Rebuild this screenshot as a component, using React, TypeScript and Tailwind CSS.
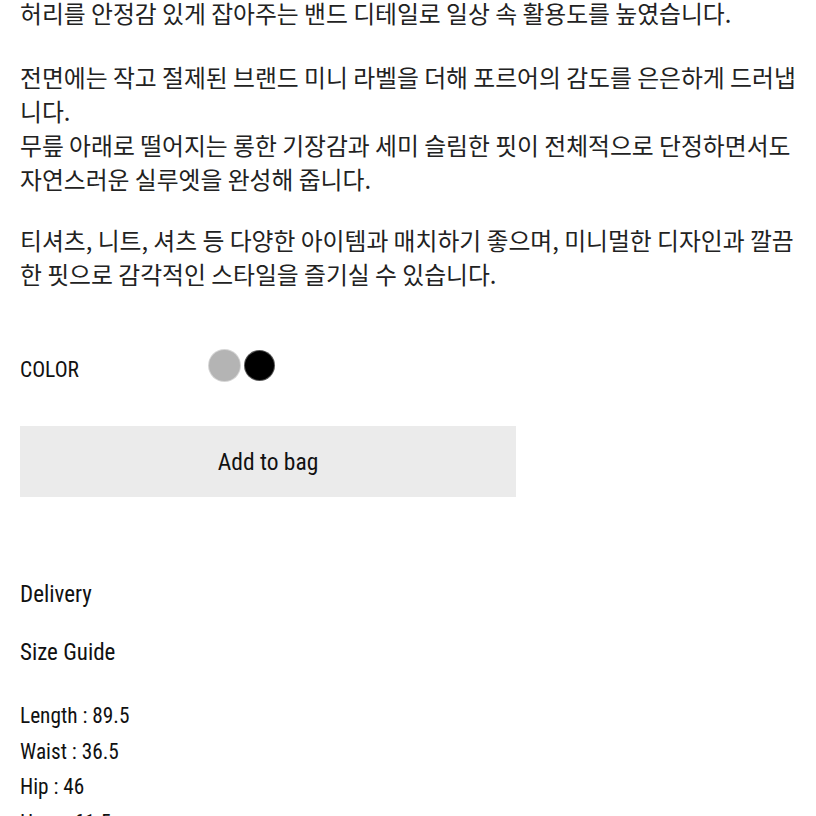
const korean = '"Noto Sans CJK KR", "Noto Sans", sans-serif'
const latin = '"Roboto Condensed", "Liberation Sans Narrow", Roboto, sans-serif'

const sizes = ["Length : 89.5", "Waist : 36.5", "Hip : 46", "Hem : 61.5"]

export default function App() {
    return (
        <div className="w-[816px] h-[816px] overflow-hidden bg-white text-[#1a1a1a]">
            <div
                className="px-5 text-[23.8px] leading-[34px] text-[#222]"
                style={{ fontFamily: korean }}
            >
                <p className="-mt-[4px]">
                    허리를 안정감 있게 잡아주는 밴드 디테일로 일상 속 활용도를 높였습니다.
                </p>
                <p className="mt-[30px]">
                    <span className="block whitespace-nowrap">
                        전면에는 작고 절제된 브랜드 미니 라벨을 더해 포르어의 감도를 은은하게 드러냅
                    </span>
                    <span className="block">니다.</span>
                    <span className="block whitespace-nowrap">
                        무릎 아래로 떨어지는 롱한 기장감과 세미 슬림한 핏이 전체적으로 단정하면서도
                    </span>
                    <span className="block">자연스러운 실루엣을 완성해 줍니다.</span>
                </p>
                <p className="mt-[27px]">
                    <span className="block whitespace-nowrap">
                        티셔츠, 니트, 셔츠 등 다양한 아이템과 매치하기 좋으며, 미니멀한 디자인과 깔끔
                    </span>
                    <span className="block">한 핏으로 감각적인 스타일을 즐기실 수 있습니다.</span>
                </p>
            </div>

            <div
                className="px-5 text-[23px] text-[#111]"
                style={{ fontFamily: latin }}
            >
                <div className="mt-[63px] flex items-center h-[32px]">
                    <span className="w-[189px] text-[21.5px]">COLOR</span>
                    <div className="flex items-center gap-[5px] -mt-[9px]">
                        <span className="w-[31px] h-[31px] rounded-full bg-[#b4b4b4] ring-1 ring-[#d6d6d6]" />
                        <span className="w-[29px] h-[29px] rounded-full bg-black ring-1 ring-[#555]" />
                    </div>
                </div>

                <button className="mt-[40px] w-[496px] h-[71px] bg-[#ebebeb] flex items-center justify-center pt-[3px] text-[23.5px]">
                    Add to bag
                </button>

                <div className="mt-[82px] h-[32px] leading-[32px]">Delivery</div>
                <div className="mt-[26px] h-[32px] leading-[32px]">Size Guide</div>

                <div className="mt-[29px] leading-[35.5px] text-[21.3px]">
                    {sizes.map((s) => (
                        <div key={s}>{s}</div>
                    ))}
                </div>
            </div>
        </div>
    )
}
